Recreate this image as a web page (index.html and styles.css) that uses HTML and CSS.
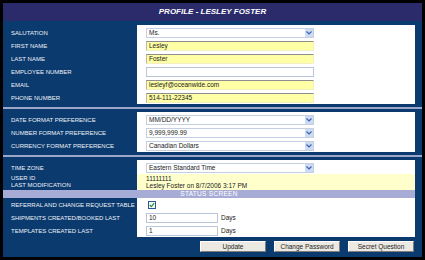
FILE: index.html
```html
<!DOCTYPE html>
<html lang="en">
<head>
    <meta charset="UTF-8">
    <title>Profile - Lesley Foster</title>
    <link rel="stylesheet" href="styles.css">
</head>
<body>
    <div class="frame">
        <div class="title">PROFILE - LESLEY FOSTER</div>

        <!-- Personal details -->
        <div class="section">
            <div class="row">
                <span class="label">SALUTATION</span>
                <div class="cell">
                    <div class="select"><span>Ms.</span><span class="arrow"><svg width="6" height="4" viewBox="0 0 6 4"><polyline points="0.5,0.5 3,3 5.5,0.5" fill="none" stroke="#3a64b0" stroke-width="1.2"/></svg></span></div>
                </div>
            </div>
            <div class="row">
                <span class="label">FIRST NAME</span>
                <div class="cell"><span class="field yellow">Lesley</span></div>
            </div>
            <div class="row">
                <span class="label">LAST NAME</span>
                <div class="cell"><span class="field yellow">Foster</span></div>
            </div>
            <div class="row">
                <span class="label">EMPLOYEE NUMBER</span>
                <div class="cell"><span class="field"></span></div>
            </div>
            <div class="row">
                <span class="label">EMAIL</span>
                <div class="cell"><span class="field yellow">lesleyf@oceanwide.com</span></div>
            </div>
            <div class="row">
                <span class="label">PHONE NUMBER</span>
                <div class="cell"><span class="field yellow">514-111-22345</span></div>
            </div>
        </div>

        <div class="divider"></div>

        <!-- Format preferences -->
        <div class="section">
            <div class="row">
                <span class="label">DATE FORMAT PREFERENCE</span>
                <div class="cell">
                    <div class="select"><span>MM/DD/YYYY</span><span class="arrow"><svg width="6" height="4" viewBox="0 0 6 4"><polyline points="0.5,0.5 3,3 5.5,0.5" fill="none" stroke="#3a64b0" stroke-width="1.2"/></svg></span></div>
                </div>
            </div>
            <div class="row">
                <span class="label">NUMBER FORMAT PREFERENCE</span>
                <div class="cell">
                    <div class="select"><span>9,999,999.99</span><span class="arrow"><svg width="6" height="4" viewBox="0 0 6 4"><polyline points="0.5,0.5 3,3 5.5,0.5" fill="none" stroke="#3a64b0" stroke-width="1.2"/></svg></span></div>
                </div>
            </div>
            <div class="row">
                <span class="label">CURRENCY FORMAT PREFERENCE</span>
                <div class="cell">
                    <div class="select"><span>Canadian Dollars</span><span class="arrow"><svg width="6" height="4" viewBox="0 0 6 4"><polyline points="0.5,0.5 3,3 5.5,0.5" fill="none" stroke="#3a64b0" stroke-width="1.2"/></svg></span></div>
                </div>
            </div>
        </div>

        <div class="divider"></div>

        <!-- Account + status screen -->
        <div class="section">
            <div class="row">
                <span class="label">TIME ZONE</span>
                <div class="cell">
                    <div class="select"><span>Eastern Standard Time</span><span class="arrow"><svg width="6" height="4" viewBox="0 0 6 4"><polyline points="0.5,0.5 3,3 5.5,0.5" fill="none" stroke="#3a64b0" stroke-width="1.2"/></svg></span></div>
                </div>
            </div>
            <div class="row info-row">
                <div class="label stack">
                    <span>USER ID</span>
                    <span>LAST MODIFICATION</span>
                </div>
                <div class="cell info">
                    <span>11111111</span>
                    <span>Lesley Foster on 8/7/2006 3:17 PM</span>
                </div>
            </div>
            <div class="status">STATUS SCREEN</div>
            <div class="row">
                <span class="label">REFERRAL AND CHANGE REQUEST TABLE</span>
                <div class="cell">
                    <span class="check"><svg width="6" height="6" viewBox="0 0 6 6"><polyline points="0.8,3 2.4,4.6 5.2,1.2" fill="none" stroke="#1f9a2a" stroke-width="1.3"/></svg></span>
                </div>
            </div>
            <div class="row">
                <span class="label">SHIPMENTS CREATED/BOOKED LAST</span>
                <div class="cell"><span class="field short">10</span><span class="unit">Days</span></div>
            </div>
            <div class="row">
                <span class="label">TEMPLATES CREATED LAST</span>
                <div class="cell"><span class="field short">1</span><span class="unit">Days</span></div>
            </div>
        </div>

        <div class="actions">
            <button class="btn">Update</button>
            <button class="btn">Change Password</button>
            <button class="btn">Secret Question</button>
        </div>
    </div>
</body>
</html>
```

FILE: styles.css
```css
:root {
    --navy: #0b3a6e;
    --header: #2b2b6b;
    --rule: #9ba6c9;
    --status: #a7acd6;
    --yellow: #ffffa6;
    --pale: #ffffcc;
}

* {
    margin: 0;
    padding: 0;
    box-sizing: border-box;
}

body {
    background: #ffffff;
    font-family: "Liberation Sans", Arial, sans-serif;
}

.frame {
    width: 425px;
    height: 260px;
    border: 3px solid #000000;
    background: var(--navy);
    overflow: hidden;
}

.title {
    height: 18px;
    line-height: 18px;
    margin-bottom: 4px;
    background: var(--header);
    color: #ffffff;
    font-size: 8px;
    font-weight: bold;
    font-style: italic;
    text-align: center;
}

.row {
    display: grid;
    grid-template-columns: 134px 278px;
    height: 13px;
}

.section > .row:first-child {
    height: 14px;
}

.section > .row:first-child > * {
    padding-top: 1px;
}

.label {
    display: flex;
    align-items: center;
    padding-left: 8px;
    color: #eef2f8;
    font-size: 6px;
    white-space: nowrap;
}

.cell {
    display: flex;
    align-items: center;
    padding-left: 9px;
    background: #ffffff;
    color: #1a1a1a;
    font-size: 6.5px;
}

.field {
    display: flex;
    align-items: center;
    width: 168px;
    height: 10px;
    padding-left: 2px;
    border: 1px solid #b8c6da;
    background: #ffffff;
}

.field.yellow {
    background: var(--yellow);
    border-color: #8e8e8e #f0f0c0 #f0f0c0 #b8b8a8;
}

.field.short {
    width: 72px;
}

.unit {
    margin-left: 3px;
}

.select {
    display: flex;
    align-items: center;
    justify-content: space-between;
    width: 168px;
    height: 10px;
    padding-left: 2px;
    border: 1px solid #c4d0e2;
    background: #ffffff;
}

.arrow {
    display: flex;
    align-items: center;
    justify-content: center;
    width: 8px;
    height: 8px;
    background: #cddcf3;
}

.divider {
    height: 2px;
    margin: 3px 0;
    background: var(--rule);
}

.info-row {
    height: 16px;
}

.stack {
    flex-direction: column;
    align-items: flex-start;
    justify-content: center;
    line-height: 7px;
}

.info {
    flex-direction: column;
    align-items: flex-start;
    justify-content: center;
    background: var(--pale);
    line-height: 7px;
}

.status {
    width: 412px;
    height: 8px;
    line-height: 8px;
    background: var(--status);
    color: #ffffff;
    font-size: 6.5px;
    letter-spacing: 0.3px;
    text-align: center;
}

.check {
    display: flex;
    align-items: center;
    justify-content: center;
    width: 8px;
    height: 8px;
    margin-left: 2px;
    border: 1px solid #2a5a8c;
    background: #ffffff;
}

.actions {
    display: flex;
    justify-content: flex-end;
    gap: 8px;
    padding: 4px 8px 0 0;
}

.btn {
    width: 66px;
    height: 11px;
    border: 1px solid;
    border-color: #ffffff #7d7d7d #7d7d7d #ffffff;
    background: #ece9e2;
    color: #222222;
    font-family: "Liberation Sans", Arial, sans-serif;
    font-size: 6.5px;
    line-height: 9px;
}
```
